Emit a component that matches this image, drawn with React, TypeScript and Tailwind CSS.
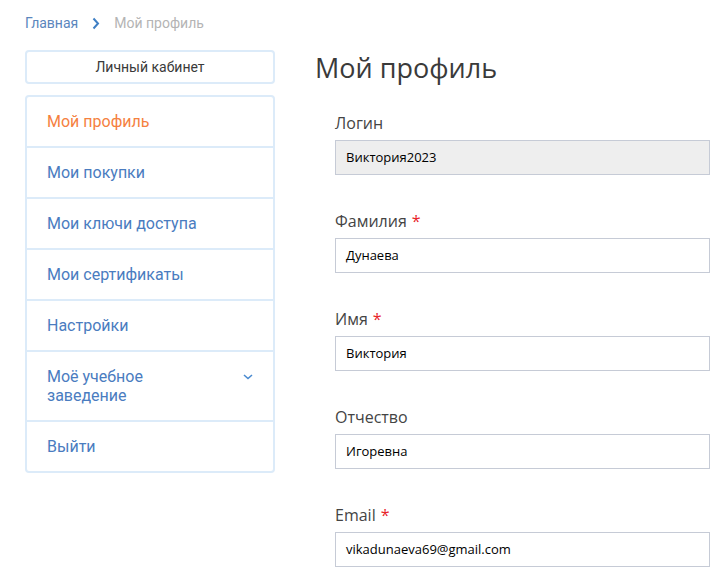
import React from 'react';

const menu = [
  { label: 'Мой профиль', active: true },
  { label: 'Мои покупки' },
  { label: 'Мои ключи доступа' },
  { label: 'Мои сертификаты' },
  { label: 'Настройки' },
  { label: 'Моё учебное\nзаведение', expandable: true },
  { label: 'Выйти' },
];

const fields = [
  { label: 'Логин', value: 'Виктория2023', disabled: true },
  { label: 'Фамилия', value: 'Дунаева', required: true },
  { label: 'Имя', value: 'Виктория', required: true },
  { label: 'Отчество', value: 'Игоревна' },
  { label: 'Email', value: 'vikadunaeva69@gmail.com', required: true },
];

export default function App() {
  return (
    <div className="min-h-screen bg-white pl-[25px] pt-[14px] font-['Roboto',sans-serif]">
      {/* Breadcrumbs */}
      <div className="flex items-center h-[18px] text-[14px]">
        <a className="text-[#5a86bd]">Главная</a>
        <svg className="ml-[14px] mr-[14px]" width="8" height="13" viewBox="0 0 8 13">
          <path d="M1.5 1.5 L6 6.5 L1.5 11.5" fill="none" stroke="#3f7fc4" strokeWidth="2" />
        </svg>
        <span className="text-[#b4b4b4]">Мой профиль</span>
      </div>

      <div className="flex mt-[18px]">
        {/* Sidebar */}
        <aside className="w-[250px] shrink-0">
          <div className="h-[34px] flex items-center justify-center border-2 border-[#dcebf9] rounded-[4px] text-[14px] text-[#3a3a3a]">
            Личный кабинет
          </div>
          <nav className="mt-[11px] border-2 border-[#dcebf9] rounded-[4px]">
            {menu.map((item, i) => (
              <div
                key={item.label}
                className={
                  'flex items-center justify-between pl-[20px] pr-[20px] text-[16px] leading-[19px] ' +
                  (item.expandable ? 'h-[70px] ' : i > 0 ? 'h-[51px] ' : 'h-[49px] ') +
                  (i > 0 ? 'border-t-2 border-[#dcebf9] ' : '') +
                  (item.active ? 'text-[#f5813f]' : 'text-[#4a7cc0]')
                }
              >
                <span className="whitespace-pre-line">{item.label}</span>
                {item.expandable && (
                  <svg className="mb-[18px]" width="10" height="6" viewBox="0 0 10 6">
                    <path d="M1 1 L5 4.5 L9 1" fill="none" stroke="#4a8ad0" strokeWidth="1.6" />
                  </svg>
                )}
              </div>
            ))}
          </nav>
        </aside>

        {/* Content */}
        <main className="ml-[40px] flex-1 pr-[16px]">
          <h1 className="text-[27px] leading-[32px] text-[#3a3a3a] font-['Open_Sans',sans-serif] mt-[2px]">
            Мой профиль
          </h1>
          <div className="pl-[20px] pt-[29px]">
            {fields.map((f, i) => (
              <div key={f.label} className={i > 0 ? 'mt-[36px]' : ''}>
                <div className="text-[16px] leading-[20px] text-[#444] font-['Open_Sans',sans-serif]">
                  {f.label}
                  {f.required && <span className="text-[#e8232a] ml-[5px]">*</span>}
                </div>
                <div
                  className={
                    'mt-[7px] h-[35px] flex items-center px-[10px] border border-[#c6cbd6] text-[13px] text-black font-["Open_Sans",sans-serif] ' +
                    (f.disabled ? 'bg-[#eeeeee]' : 'bg-white')
                  }
                >
                  {f.value}
                </div>
              </div>
            ))}
          </div>
        </main>
      </div>
    </div>
  );
}
